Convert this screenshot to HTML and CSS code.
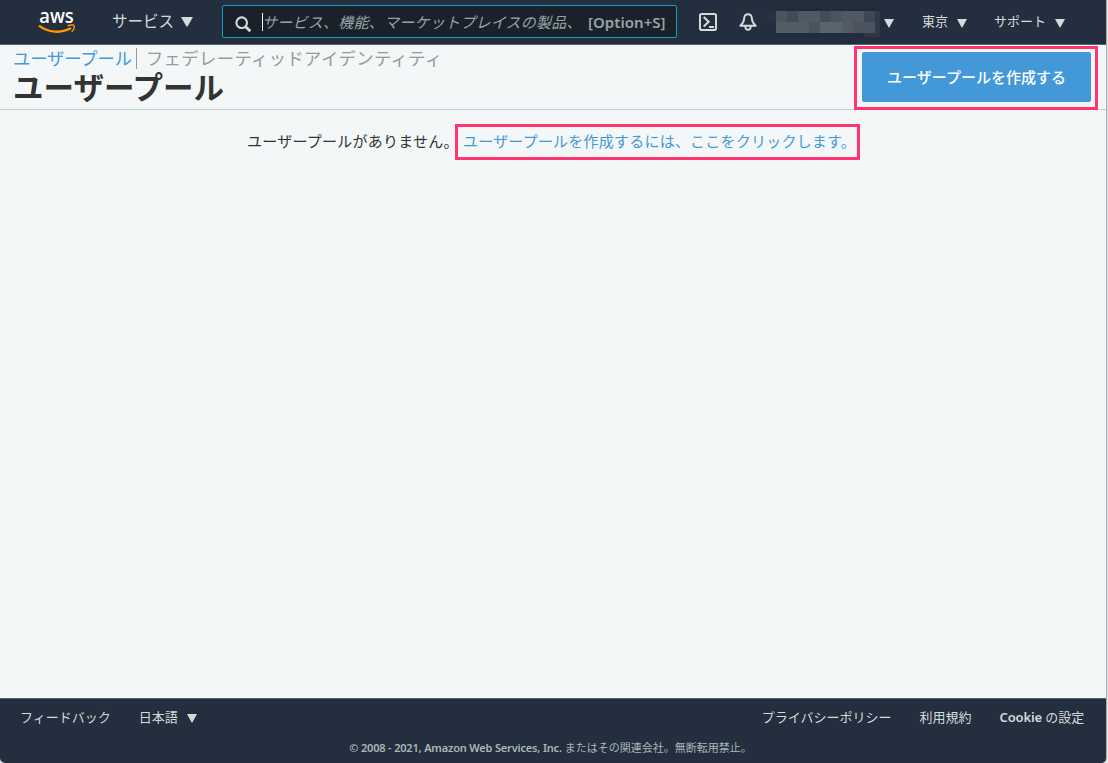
FILE: index.html
```html
<!DOCTYPE html>
<html lang="ja">
<head>
<meta charset="utf-8">
<title>ユーザープール</title>
<link rel="stylesheet" href="styles.css">
</head>
<body>
<div class="window">
  <header class="nav">
    <svg class="logo" width="38" height="28" viewBox="0 0 38 28">
      <text class="logo-text" x="1.3" y="14.8" textLength="34.5" lengthAdjust="spacingAndGlyphs">aws</text>
      <path d="M1 17.7C10 25 24 25.5 33 20.1" fill="none" stroke="#ff9900" stroke-width="2.3"/>
      <path d="M29.5 17.8C33 16.5 36 16.9 36.2 17.7C36.6 19 35.4 22 33.6 23.8" fill="none" stroke="#ff9900" stroke-width="1.4"/>
    </svg>
    <a class="services">サービス<svg class="caret-lg" width="12" height="10"><path d="M0 0H12L6.8 9Q6 10 5.2 9Z"/></svg></a>
    <div class="search">
      <svg width="17" height="17" viewBox="0 0 17 17" fill="none" stroke="#d5dbdb"><circle cx="6.7" cy="6.7" r="5.3" stroke-width="2.1"/><path d="M10.7 10.7L15.3 15.3" stroke-width="2.8"/></svg>
      <i class="cursor"></i>
      <span class="placeholder">サービス、機能、マーケットプレイスの製品、</span>
      <b class="shortcut">[Option+S]</b>
    </div>
    <svg class="shell" width="18" height="18" viewBox="0 0 18 18" fill="none" stroke="#d5dbdb" stroke-width="2"><rect x="1" y="1" width="16" height="16" rx="1.8"/><path d="M4.7 4L9.7 8.7L4.7 13.4M10 14H15"/></svg>
    <svg class="bell" width="18" height="18" viewBox="0 0 18 18" fill="none" stroke="#d5dbdb" stroke-width="1.9" stroke-linejoin="round"><path d="M9 1.2C6.1 1.2 5.3 3.3 5.2 5.3C5 8.7 3.8 10.6 1.3 12.7H16.7C14.2 10.6 13 8.7 12.8 5.3C12.7 3.3 11.9 1.2 9 1.2ZM9 1.2V.2M6.3 13.3C6.3 18 11.7 18 11.7 13.3"/></svg>
    <svg class="account" width="114" height="30" viewBox="0 0 114 30" shape-rendering="crispEdges">
      <path fill="#202b3c" d="M9 0h104v4H9z"/><path fill="#27313f" d="M0 4h9v11H0z"/><path fill="#212c3c" d="M0 26h9v4H0zM9 26h88v4H9z"/><path fill="#343643" d="M97 26h16v4H97z"/>
      <path fill="#4b555f" d="M9 4h99v11H9z"/><path fill="#525c66" d="M9 15h99v11H9z"/>
      <path fill="#434d59" d="M20 4h11v11H20zM53 4h11v11H53z"/><path fill="#505963" d="M31 4h22v11H31zM75 4h22v11H75z"/><path fill="#3d4854" d="M97 4h11v11H97z"/><path fill="#303b4a" d="M108 4h5v22h-5z"/>
      <path fill="#4a535f" d="M42 15h11v11H42zM86 15h22v11H86z"/><path fill="#5a646c" d="M53 15h22v11H53z"/>
    </svg>
    <svg class="caret account-caret" width="10" height="9"><path d="M0 0H10L5.6 8Q5 9 4.4 8Z"/></svg>
    <a class="region">東京<svg class="caret" width="10" height="9"><path d="M0 0H10L5.6 8Q5 9 4.4 8Z"/></svg></a>
    <a class="support">サポート<svg class="caret" width="10" height="9"><path d="M0 0H10L5.6 8Q5 9 4.4 8Z"/></svg></a>
  </header>
  <section class="heading">
    <div>
      <nav class="tabs"><a class="tab active">ユーザープール</a><a class="tab">フェデレーティッドアイデンティティ</a></nav>
      <h1>ユーザープール</h1>
    </div>
    <a class="create">ユーザープールを作成する</a>
  </section>
  <main class="content">
    <span>ユーザープールがありません。</span><a class="create-link">ユーザープールを作成するには、ここをクリックします。</a>
  </main>
  <footer class="footer">
    <div class="links">
      <a class="feedback">フィードバック</a>
      <a class="language">日本語<svg class="caret" width="10" height="9"><path d="M0 0H10L5.6 8Q5 9 4.4 8Z"/></svg></a>
      <a class="privacy">プライバシーポリシー</a>
      <a class="terms">利用規約</a>
      <a><b class="cookie">Cookie</b> の設定</a>
    </div>
    <p class="copyright"><b>© 2008 - 2021, Amazon Web Services, Inc.</b> またはその関連会社。無断転用禁止。</p>
  </footer>
</div>
</body>
</html>
```
FILE: styles.css
```css
* { box-sizing: border-box; }
body {
  margin: 0;
  background: #e3e5e6;
  font-family: "Noto Sans", "Noto Sans CJK JP", sans-serif;
  color: #333;
}
.window {
  width: 1107px;
  height: 763px;
  display: flex;
  flex-direction: column;
  background: #f3f7f8;
  border-right: 1px solid #aaadb0;
  border-radius: 0 0 5px 5px;
  overflow: hidden;
}
svg { display: block; flex: none; }
a, span, h1, p { white-space: nowrap; }
.nav {
  height: 45px;
  flex: none;
  display: flex;
  align-items: flex-start;
  background: #232f3e;
  border-bottom: 1px solid #59636b;
  color: #d5dbdb;
}
.logo { margin: 8px 0 0 38px; overflow: visible; }
.logo-text { font: 600 19px "Open Sans", sans-serif; fill: #fff; }
.caret, .caret-lg { fill: #d5dbdb; }
.services {
  width: 110px;
  margin: 9px 0 0 36px;
  display: flex;
  font-size: 15.5px;
  line-height: 24px;
}
.caret-lg { margin: 8px 0 0 6.5px; }
.search {
  width: 455px;
  height: 33px;
  margin-top: 5px;
  display: flex;
  align-items: center;
  padding-left: 12px;
  background: #1a212b;
  border: 1px solid #0f9fc4;
  border-radius: 2px;
  color: #95a5a6;
  font-size: 15px;
  line-height: 24px;
}
.search svg { margin-top: 5px; }
.cursor { width: 1px; height: 18px; margin-left: 10px; background: #fff; }
.placeholder { width: 325px; font-style: italic; letter-spacing: .25px; text-indent: -1px; }
.shortcut { font-weight: 600; letter-spacing: .05px; }
.shell { margin: 13px 0 0 22px; }
.bell { margin: 13px 0 0 21.5px; }
.account { margin: 7px 0 0 10.5px; }
.account-caret { margin: 19px 0 0 3px; }
.region, .support {
  display: flex;
  margin-top: 10px;
  font-size: 13px;
  line-height: 23px;
}
.region { margin-left: 28px; }
.support { margin-left: 27px; }
.region .caret, .support .caret { margin: 9px 0 0 9px; }
.heading {
  height: 65px;
  flex: none;
  display: flex;
  justify-content: space-between;
  padding: 0 15px 0 13px;
  border-bottom: 1px solid #c8cfd0;
}
.tabs { display: flex; padding-top: 3px; font-size: 17.3px; line-height: 21px; }
.tab { color: #999; letter-spacing: .4px; }
.active {
  width: 124px;
  margin-right: 9px;
  border-right: 1px solid #999;
  color: #4399d8;
  letter-spacing: -.1px;
}
h1 { margin: 0; font-size: 30.5px; line-height: 36px; font-weight: 700; }
.create {
  position: relative;
  width: 229px;
  height: 50px;
  margin-top: 7px;
  background: #4399d8;
  border-radius: 2px;
  color: #fff;
  font-size: 15px;
  font-weight: 500;
  line-height: 50px;
  text-align: center;
}
.create::after {
  content: "";
  position: absolute;
  inset: -6px -7px -8px -8px;
  border: 3px solid #ff3471;
}
.content {
  flex: 1;
  display: flex;
  align-items: flex-start;
  padding: 14px 0 0 247px;
  font-size: 15px;
  line-height: 36px;
}
.content span { width: 208px; margin-top: -1px; letter-spacing: .25px; }
.create-link {
  width: 405px;
  height: 36px;
  padding-left: 5px;
  border: 3px solid #ff3471;
  color: #4399d8;
  line-height: 28px;
  letter-spacing: .22px;
}
.footer {
  height: 65px;
  background: #232f3e;
  border-top: 1px solid #59636b;
  color: #d5dbdb;
}
.links {
  display: flex;
  padding: 6px 0 0 20px;
  font-size: 13px;
  line-height: 24px;
}
.language { display: flex; margin-left: 28px; }
.language .caret { margin: 9px 0 0 9px; }
.privacy { margin-left: auto; margin-right: 28px; }
.terms { margin-right: 28px; }
.links a:last-child { width: 106.5px; }
.cookie { font-weight: 600; letter-spacing: -.15px; }
.copyright {
  margin: 9px 0 0;
  padding-right: 5px;
  text-align: center;
  color: #aab7b8;
  font-size: 11px;
  line-height: 20px;
}
.copyright b { font-weight: 600; letter-spacing: -.18px; }
```
